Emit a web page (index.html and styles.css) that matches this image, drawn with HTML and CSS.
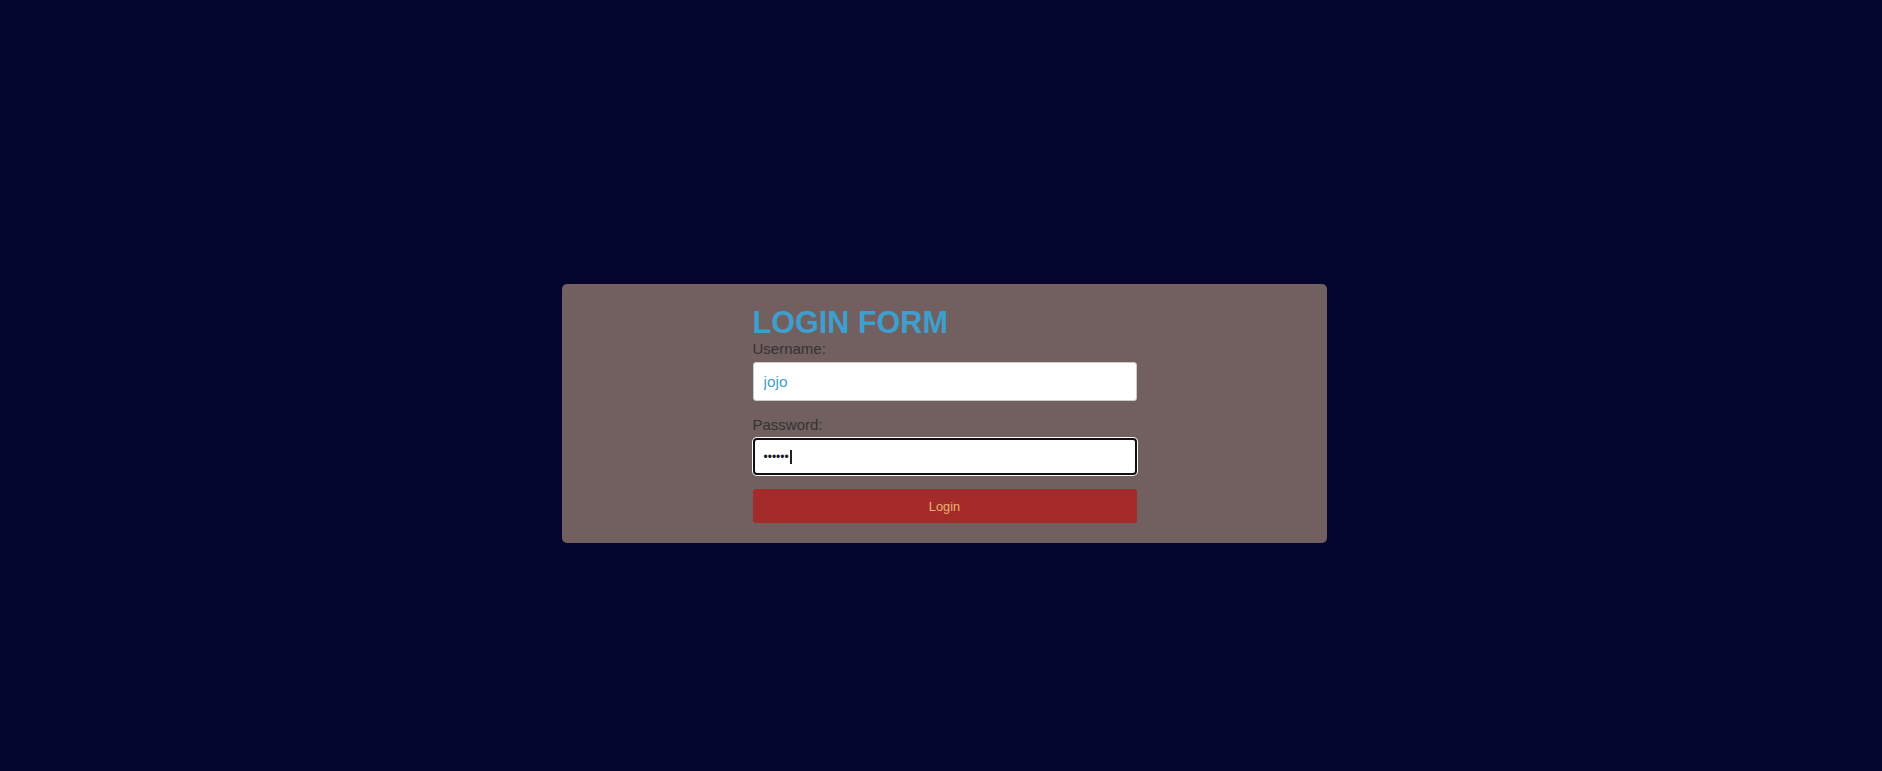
FILE: index.html
```html
<!DOCTYPE html>
<html lang="en">
<head>
<meta charset="utf-8">
<title>Login Form</title>
<link rel="stylesheet" href="styles.css">
</head>
<body>
<div class="page">
  <div class="card">
    <form class="login-form">
      <h1 class="title">LOGIN FORM</h1>
      <label class="label" for="username">Username:</label>
      <input class="input" id="username" type="text" value="jojo">
      <label class="label label-pass" for="password">Password:</label>
      <div class="input input-focused" id="password"><span class="dots">••••••</span><span class="caret"></span></div>
      <button class="btn" type="button">Login</button>
    </form>
  </div>
</div>
</body>
</html>
```
FILE: styles.css
```css
html, body {
  margin: 0;
  padding: 0;
  height: 100%;
}
body {
  background: #03052e;
  font-family: "Liberation Sans", Arial, sans-serif;
}
.page {
  display: flex;
  justify-content: center;
  align-items: flex-start;
  padding: 284px 0 0 7px;
}
.card {
  width: 765px;
  box-sizing: border-box;
  background: #725f5f;
  border-radius: 5px;
  padding: 20px 0;
  display: flex;
  justify-content: center;
}
.login-form {
  width: 384px;
  display: flex;
  flex-direction: column;
}
.title {
  margin: 0;
  font-size: 30.6px;
  line-height: 36px;
  font-weight: bold;
  color: #3e9fce;
}
.label {
  display: block;
  font-size: 15px;
  line-height: 18px;
  color: #333333;
}
.label-pass {
  margin-top: 15px;
}
.input {
  margin: 4px 0 0;
  box-sizing: border-box;
  width: 384px;
  height: 39px;
  padding: 0 10px;
  border: 1px solid #cccccc;
  border-radius: 3px;
  background: #ffffff;
  font-family: "Liberation Sans", Arial, sans-serif;
  font-size: 15.4px;
  color: #3e9fce;
  outline: none;
}
.input-focused {
  height: 37px;
  display: flex;
  align-items: center;
  border: 2px solid #101010;
  border-radius: 4px;
  box-shadow: 0 0 0 1px #ffffff;
  padding: 0 9px;
}
.dots {
  font-size: 12px;
  line-height: 14px;
  color: #1a1a2e;
  letter-spacing: 0;
}
.caret {
  display: inline-block;
  width: 2px;
  height: 14px;
  margin-left: 1px;
  background: #222222;
}
.btn {
  margin-top: 14px;
  height: 34px;
  width: 384px;
  border: none;
  border-radius: 3px;
  background: #a52a2a;
  color: #e9b470;
  font-family: "Liberation Sans", Arial, sans-serif;
  font-size: 12.8px;
  padding: 0;
  cursor: pointer;
}
```
